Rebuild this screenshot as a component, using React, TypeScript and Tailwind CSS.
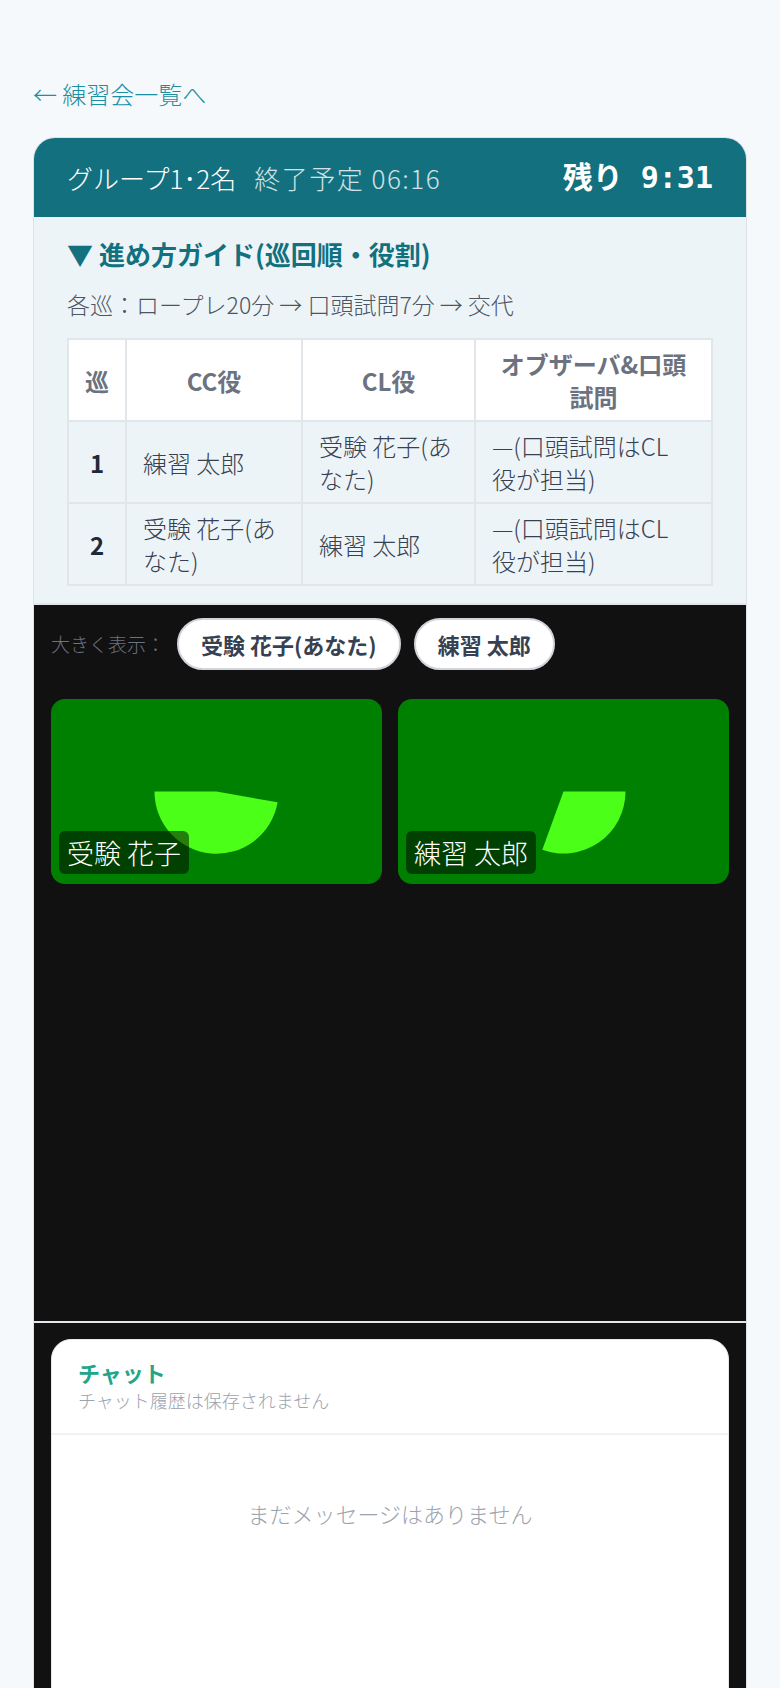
import React from "react";

const rows = [
  { no: "1", cc: "練習 太郎", cl: "受験 花子(あなた)" },
  { no: "2", cc: "受験 花子(あなた)", cl: "練習 太郎" },
];

function FakeVideo({ name, sector }: { name: string; sector: string }) {
  return (
    <div className="relative h-[185px] rounded-[14px] bg-[#008000] overflow-hidden">
      <svg
        className="absolute inset-0 w-full h-full"
        viewBox="0 0 331 185"
        preserveAspectRatio="none"
      >
        <path d={sector} fill="#4bff18" />
      </svg>
      <span className="absolute left-[8px] bottom-[10px] rounded-[6px] bg-black/50 px-[8px] py-[4px] text-[27px] leading-[35px] text-white">
        {name}
      </span>
    </div>
  );
}

export default function App() {
  return (
    <div className="min-h-screen bg-[#f5f9fb] px-[33px] pt-[76px] font-light font-['Noto_Sans_CJK_JP',sans-serif]">
      {/* back link */}
      <a className="block text-[24px] leading-[36px] text-[#1d8fa2]">← 練習会一覧へ</a>

      <div className="mt-[25px] rounded-t-[22px] border border-[#dde2e6] overflow-hidden">
        {/* header */}
        <div className="flex items-center justify-between h-[79px] bg-[#12707f] px-[33px]">
          <div className="flex items-baseline gap-[18px] text-[26px] leading-[34px]">
            <span className="text-white">グループ1･2名</span>
            <span className="text-white/80 tracking-[1.5px]">終了予定 06:16</span>
          </div>
          <span className="text-[30px] leading-[38px] font-bold text-white font-['DejaVu_Sans_Mono','Noto_Sans_CJK_JP',monospace]">
            残り 9:31
          </span>
        </div>

        {/* guide */}
        <div className="bg-[#edf4f8] px-[33px] pt-[19px] pb-[17px] border-b-2 border-[#e1e6ea]">
          <div className="text-[26px] leading-[36px] font-bold text-[#12707f]">
            ▼ 進め方ガイド(巡回順・役割)
          </div>
          <div className="mt-[16px] text-[23px] leading-[33px] text-[#4b5563]">
            各巡：ロープレ20分 → 口頭試問7分 → 交代
          </div>
          <table className="mt-[17px] w-full table-fixed border-collapse border-2 border-[#e1e6ea] text-[24px] leading-[33px]">
            <colgroup>
              <col className="w-[58px]" />
              <col className="w-[176px]" />
              <col className="w-[173px]" />
              <col />
            </colgroup>
            <thead>
              <tr className="bg-white text-[#6b7280]">
                <th className="border-2 border-[#e1e6ea] py-[7px] font-bold">巡</th>
                <th className="border-2 border-[#e1e6ea] px-[16px] py-[7px] font-bold">CC役</th>
                <th className="border-2 border-[#e1e6ea] px-[16px] py-[7px] font-bold">CL役</th>
                <th className="border-2 border-[#e1e6ea] px-[16px] py-[7px] font-bold">
                  オブザーバ&口頭
                  <br />
                  試問
                </th>
              </tr>
            </thead>
            <tbody>
              {rows.map((r) => (
                <tr key={r.no} className="text-[#374151]">
                  <td className="border-2 border-[#e1e6ea] py-[7px] text-center font-bold text-[#1f2937]">
                    {r.no}
                  </td>
                  <td className="border-2 border-[#e1e6ea] px-[16px] py-[7px]">{r.cc}</td>
                  <td className="border-2 border-[#e1e6ea] px-[16px] py-[7px]">{r.cl}</td>
                  <td className="border-2 border-[#e1e6ea] px-[16px] py-[7px]">
                    —(口頭試問はCL
                    <br />
                    役が担当)
                  </td>
                </tr>
              ))}
            </tbody>
          </table>
        </div>

        {/* video area */}
        <div className="h-[718px] bg-[#111111] px-[17px] pt-[13px] border-b-2 border-[#e5e7eb]">
          <div className="flex items-center">
            <span className="text-[19px] text-[#6b7280] mr-[12px]">大きく表示：</span>
            <div className="flex gap-[13px]">
              <button className="h-[52px] rounded-full border-2 border-[#d1d5db] bg-white px-[22px] text-[22px] font-bold text-[#374151]">
                受験 花子(あなた)
              </button>
              <button className="h-[52px] rounded-full border-2 border-[#d1d5db] bg-white px-[22px] text-[22px] font-bold text-[#374151]">
                練習 太郎
              </button>
            </div>
          </div>
          <div className="mt-[29px] grid grid-cols-2 gap-[16px]">
            <FakeVideo
              name="受験 花子"
              sector="M165.5 92.5 L226.6 103.3 A62 62 0 0 1 103.5 92.5 Z"
            />
            <FakeVideo
              name="練習 太郎"
              sector="M165.5 92.5 L227.5 92.5 A62 62 0 0 1 144.3 150.8 Z"
            />
          </div>
        </div>

        {/* chat */}
        <div className="bg-[#111111] px-[17px] pt-[16px] pb-[40px]">
          <div className="rounded-[20px] border border-[#e5e7eb] bg-white overflow-hidden">
            <div className="px-[26px] pt-[17px] pb-[20px] border-b-2 border-[#f1f2f4]">
              <div className="text-[22px] leading-[30px] font-bold text-[#22a68a]">チャット</div>
              <div className="text-[18px] leading-[26px] text-[#9ca3af]">
                チャット履歴は保存されません
              </div>
            </div>
            <div className="h-[420px] flex justify-center pt-[62px]">
              <span className="text-[22px] leading-[32px] text-[#9ca3af]">
                まだメッセージはありません
              </span>
            </div>
          </div>
        </div>
      </div>
    </div>
  );
}
